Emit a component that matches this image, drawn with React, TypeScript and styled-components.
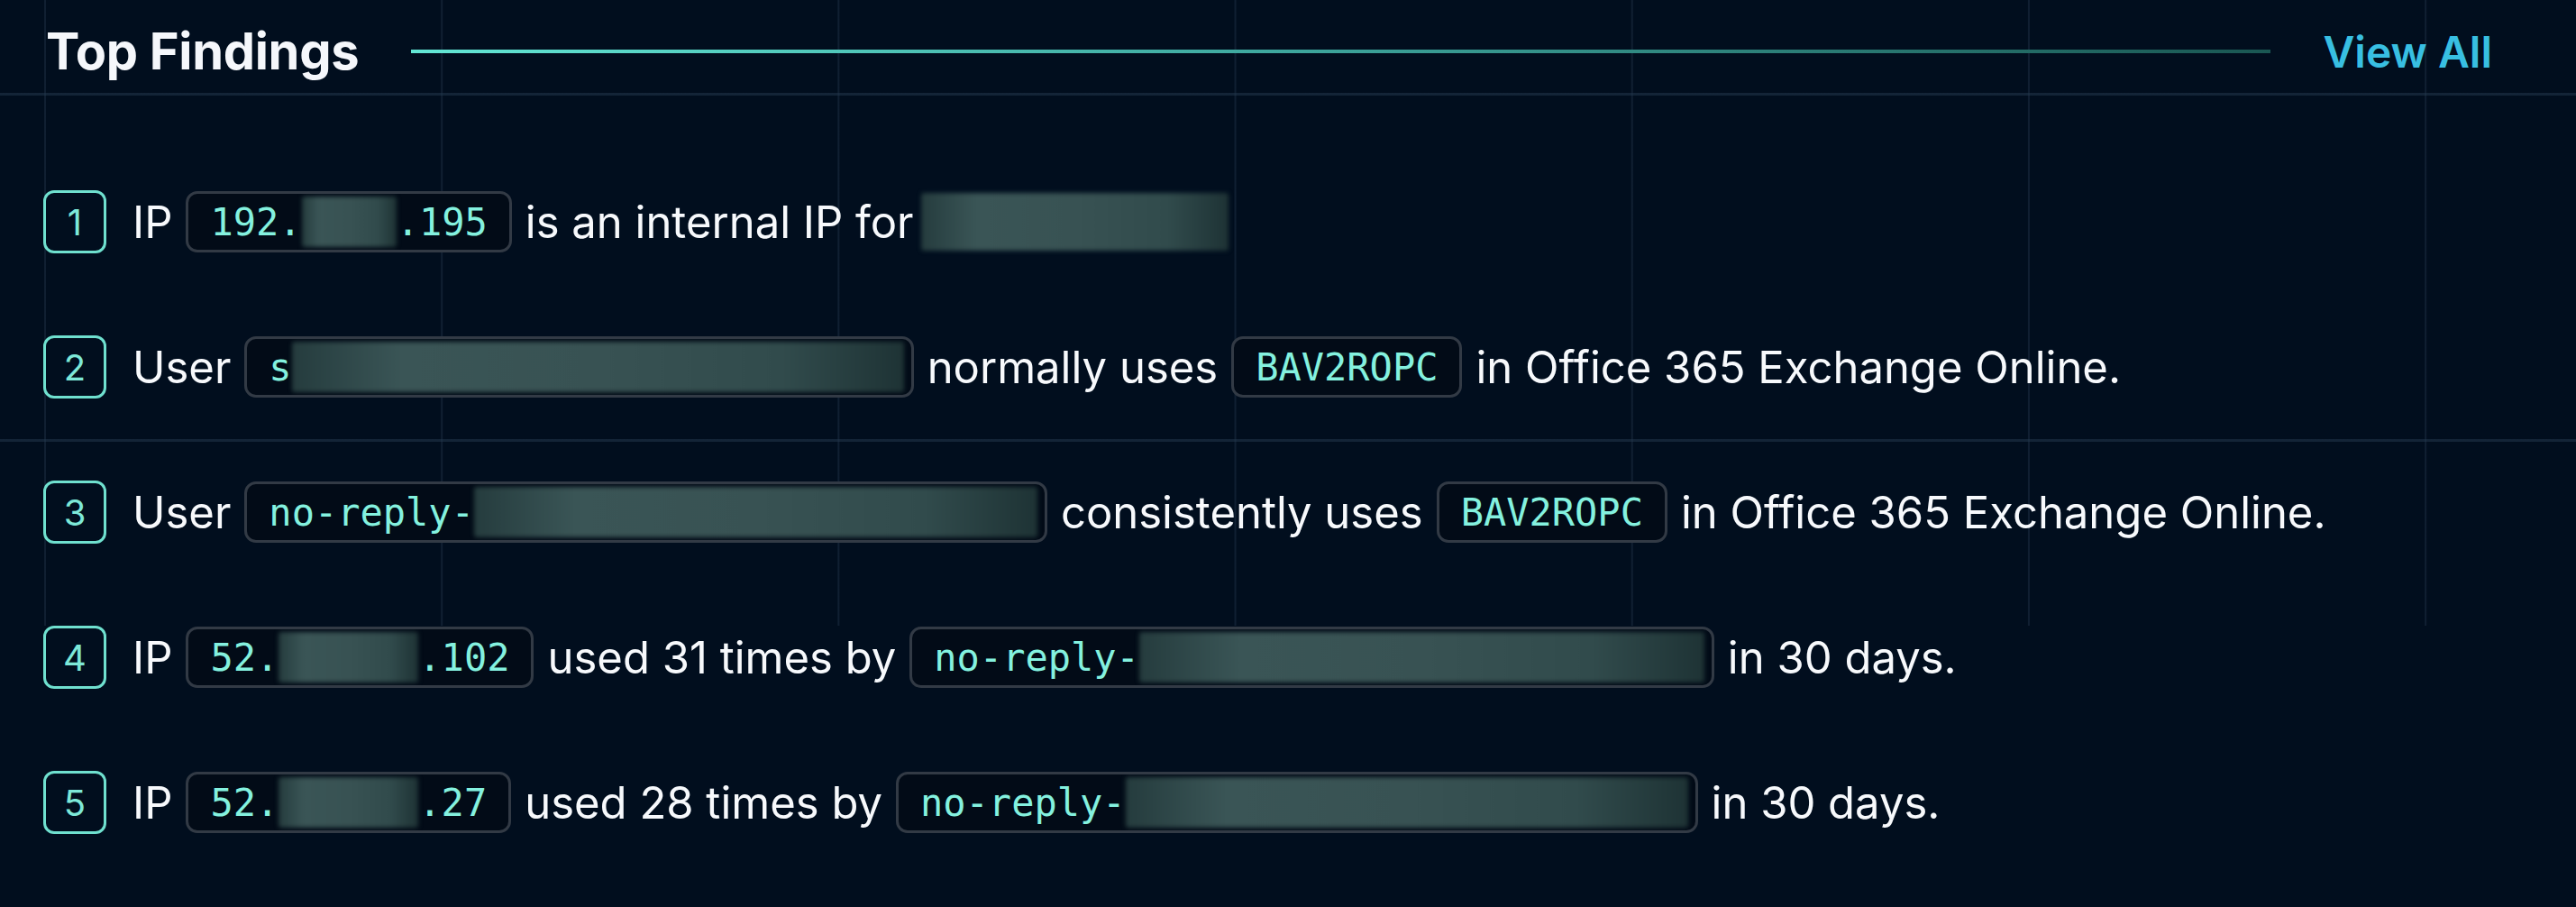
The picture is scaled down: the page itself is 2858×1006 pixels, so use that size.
import React from "react";
import styled, { createGlobalStyle } from "styled-components";

const GlobalStyle = createGlobalStyle`
  html, body {
    margin: 0;
    padding: 0;
    background: #010e1e;
  }
  * { box-sizing: border-box; }
`;

const Page = styled.div`
  position: relative;
  width: 2858px;
  height: 1006px;
  overflow: hidden;
  background: #010e1e;
  font-family: Inter, "Noto Sans", sans-serif;
  color: #f3f6fa;

  &::before {
    content: "";
    position: absolute;
    left: 0;
    top: 0;
    width: 100%;
    height: 694px;
    background-image:
      linear-gradient(to right, rgba(38, 58, 80, 0.4) 0, rgba(38, 58, 80, 0.4) 2px, transparent 2px),
      linear-gradient(to bottom, rgba(38, 58, 80, 0.5) 0, rgba(38, 58, 80, 0.5) 3px, transparent 3px);
    background-size: 440.2px 384px;
    background-position: 49px 103px;
    pointer-events: none;
  }
`;

const Content = styled.div`
  position: relative;
  padding: 0 93px 0 48px;
`;

const Header = styled.header`
  display: flex;
  align-items: center;
  gap: 58px;
  height: 114px;
`;

const Title = styled.h2`
  margin: 0 0 0 3px;
  font-size: 56px;
  font-weight: 700;
  letter-spacing: -0.3px;
  color: #f5f7fb;
`;

const Rule = styled.div`
  flex: 1;
  height: 4px;
  background: linear-gradient(90deg, #63e6d5 0%, #3fa9a0 45%, #1a5753 100%);
`;

const ViewAll = styled.a`
  font-size: 48px;
  font-weight: 600;
  color: #38bfe2;
  text-decoration: none;
  cursor: pointer;
`;

const List = styled.ol`
  list-style: none;
  margin: 0;
  padding: 98px 0 0 0;
  display: flex;
  flex-direction: column;
  gap: 93px;
`;

const Row = styled.li`
  display: flex;
  align-items: center;
  gap: 15px;
  height: 68px;
  font-size: 49px;
  white-space: nowrap;
`;

const Badge = styled.span`
  display: inline-flex;
  align-items: center;
  justify-content: center;
  width: 70px;
  height: 70px;
  margin-right: 14px;
  border: 3px solid #6fe0cf;
  border-radius: 12px;
  color: #7de8d8;
  font-size: 40px;
  font-weight: 400;
`;

const Words = styled.span`
  color: #f7f9fc;
`;

const Chip = styled.span`
  display: inline-flex;
  align-items: center;
  height: 68px;
  padding: 0 24px;
  border: 3px solid #323a45;
  border-radius: 13px;
  background: #020b17;
  color: #84f1df;
  font-family: "DejaVu Sans Mono", "Liberation Mono", monospace;
  font-size: 42px;
  overflow: hidden;
`;

const Redacted = styled.span<{ $w: number; $trail?: boolean; $bare?: boolean }>`
  display: inline-block;
  width: ${(p) => p.$w}px;
  height: ${(p) => (p.$bare ? 64 : 56)}px;
  margin-left: ${(p) => (p.$bare ? -7 : 0)}px;
  margin-right: ${(p) => (p.$trail ? -16 : 0)}px;
  background: linear-gradient(
    90deg,
    #253c3e 0%,
    #3a5556 18%,
    #385253 50%,
    #314b4c 80%,
    #1e3335 100%
  );
  filter: blur(2.5px);
  border-radius: 3px;
`;

type Part =
  | { kind: "text"; value: string }
  | { kind: "chip"; pre?: string; blur?: number; post?: string; trail?: boolean }
  | { kind: "blur"; width: number };

const findings: Part[][] = [
  [
    { kind: "text", value: "IP" },
    { kind: "chip", pre: "192.", blur: 105, post: ".195" },
    { kind: "text", value: "is an internal IP for" },
    { kind: "blur", width: 341 },
  ],
  [
    { kind: "text", value: "User" },
    { kind: "chip", pre: "s", blur: 679, trail: true },
    { kind: "text", value: "normally uses" },
    { kind: "chip", pre: "BAV2ROPC" },
    { kind: "text", value: "in Office 365 Exchange Online." },
  ],
  [
    { kind: "text", value: "User" },
    { kind: "chip", pre: "no-reply-", blur: 625, trail: true },
    { kind: "text", value: "consistently uses" },
    { kind: "chip", pre: "BAV2ROPC" },
    { kind: "text", value: "in Office 365 Exchange Online." },
  ],
  [
    { kind: "text", value: "IP" },
    { kind: "chip", pre: "52.", blur: 155, post: ".102" },
    { kind: "text", value: "used 31 times by" },
    { kind: "chip", pre: "no-reply-", blur: 627, trail: true },
    { kind: "text", value: "in 30 days." },
  ],
  [
    { kind: "text", value: "IP" },
    { kind: "chip", pre: "52.", blur: 155, post: ".27" },
    { kind: "text", value: "used 28 times by" },
    { kind: "chip", pre: "no-reply-", blur: 624, trail: true },
    { kind: "text", value: "in 30 days." },
  ],
];

function renderPart(part: Part, i: number) {
  if (part.kind === "text") return <Words key={i}>{part.value}</Words>;
  if (part.kind === "blur") return <Redacted key={i} $w={part.width} $bare />;
  return (
    <Chip key={i}>
      {part.pre}
      {part.blur ? <Redacted $w={part.blur} $trail={part.trail} /> : null}
      {part.post}
    </Chip>
  );
}

export default function App() {
  return (
    <>
      <GlobalStyle />
      <Page>
        <Content>
          <Header>
            <Title>Top Findings</Title>
            <Rule />
            <ViewAll>View All</ViewAll>
          </Header>
          <List>
            {findings.map((parts, idx) => (
              <Row key={idx}>
                <Badge>{idx + 1}</Badge>
                {parts.map(renderPart)}
              </Row>
            ))}
          </List>
        </Content>
      </Page>
    </>
  );
}
